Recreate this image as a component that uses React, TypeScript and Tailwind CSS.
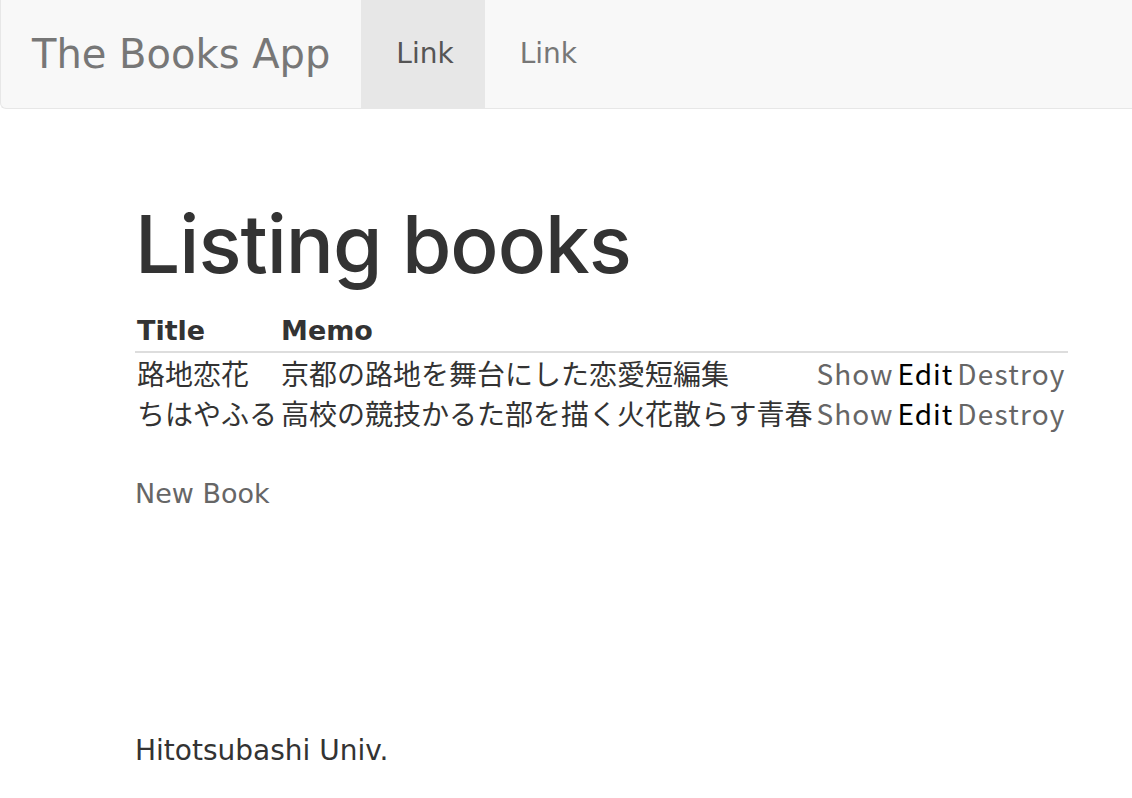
const books = [
  { title: '路地恋花', memo: '京都の路地を舞台にした恋愛短編集' },
  { title: 'ちはやふる', memo: '高校の競技かるた部を描く火花散らす青春' },
];

const verdana = { fontFamily: '"DejaVu Sans", Verdana, sans-serif' };

export default function App() {
  return (
    <div className="min-h-[798px] bg-white text-[#333]" style={verdana}>
      <nav className="flex h-[109px] items-stretch rounded-bl-[6px] border-b border-l border-[#e7e7e7] bg-[#f8f8f8]">
        <a className="flex items-center pl-[31px] pr-[31px] text-[40px] text-[#777]">The Books App</a>
        <a className="flex items-center bg-[#e7e7e7] pl-[35px] pr-[31px] text-[28px] text-[#555]">Link</a>
        <a className="flex items-center pl-[35px] pr-[31px] text-[28px] text-[#777]">Link</a>
      </nav>

      <main className="pl-[135px]">
        <h1
          className="mt-[90px] text-[80px] leading-[90px] font-medium tracking-[-1px] text-[#333]"
          style={{ fontFamily: 'Inter, "Liberation Sans", Arial, sans-serif' }}
        >
          Listing books
        </h1>

        <table className="mt-[22px] border-collapse text-[28px] leading-[40px]">
          <thead>
            <tr className="border-b-2 border-[#ddd]">
              <th className="px-[2px] text-left text-[27px] font-bold">Title</th>
              <th className="px-[2px] text-left text-[27px] font-bold">Memo</th>
              <th colSpan={3}></th>
            </tr>
          </thead>
          <tbody style={{ fontFamily: '"Noto Sans CJK JP", sans-serif' }}>
            {books.map((b) => (
              <tr key={b.title}>
                <td className="px-[2px]">{b.title}</td>
                <td className="px-[2px]">{b.memo}</td>
                <td className="px-[2px] tracking-[1px] text-[#666]">Show</td>
                <td className="px-[2px] tracking-[1px] text-black">Edit</td>
                <td className="px-[2px] tracking-[1.2px] text-[#666]">Destroy</td>
              </tr>
            ))}
          </tbody>
        </table>

        <p className="mt-[41px] text-[27px] leading-[40px] text-[#666]">New Book</p>

        <footer className="mt-[217px] text-[28px] leading-[40px] text-[#333]">Hitotsubashi Univ.</footer>
      </main>
    </div>
  );
}
